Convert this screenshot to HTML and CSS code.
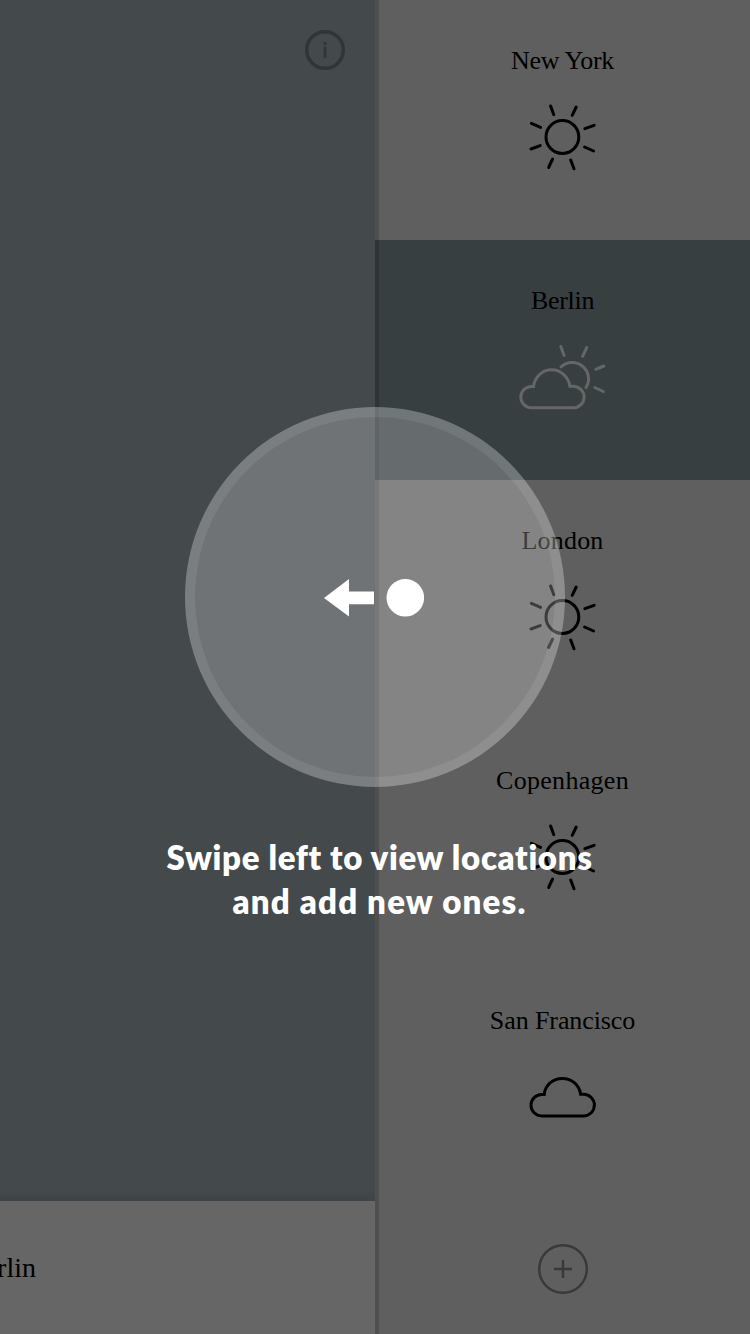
FILE: index.html
```html
<!DOCTYPE html>
<html lang="en">
<head>
<meta charset="utf-8">
<title>Weather locations</title>
<link rel="stylesheet" href="styles.css">
</head>
<body>
<svg class="symbols" aria-hidden="true">
  <symbol id="sun" viewBox="0.6 0 90 80">
    <circle cx="45" cy="40" r="16.4"/>
    <path d="M33.2 9l3.2 8.7M58.8 10l-4 8.3M14 26.4l9.200 4M67.500 31.700l9.200-3.400M13.600 52l9.200-3.400M67.200 50l9 4M35.200 62l-4 8.500M53.300 63l3.300 8.800"/>
  </symbol>
  <symbol id="partly" viewBox="0.7 0 90 80">
    <path d="M16.300 49.400C17.300 40 25 32.800 34.300 32.800S51.300 40 52.600 49.200H56a10.800 10.800 0 0 1 0 21.600H14.200a10.700 10.700 0 0 1 0-21.400zM43.700 29.800A16.400 16.400 0 0 1 68.700 50.600M43.500 9.500l3.300 9M69.500 10.500l-4.200 8.800M78.500 32.300l8-3.300M77.500 50.500l8.500 4"/>
  </symbol>
  <symbol id="cloud" viewBox="0.6 0 90 80">
    <path d="M26.800 37.500C27.800 28 35.500 21.400 45 21.400S62 28 63.200 37.300H66.200a10.800 10.800 0 0 1 0 21.600H24.300a10.700 10.700 0 0 1 0-21.400z"/>
  </symbol>
</svg>
<main class="screen">
  <section class="current">
    <div class="sky">
      <svg class="info" viewBox="0 0 40 40"><circle cx="20" cy="20" r="18.300"/><path d="M20 16.500V28"/><circle class="dot" cx="20" cy="13.400" r="1.600"/></svg>
    </div>
    <footer class="place"><span>Berlin</span></footer>
  </section>
  <nav class="locations">
    <div class="location new-york"><span>New York</span><svg><use href="#sun"/></svg></div>
    <div class="location berlin"><span>Berlin</span><svg><use href="#partly"/></svg></div>
    <div class="location london"><span>London</span><svg><use href="#sun"/></svg></div>
    <div class="location copenhagen"><span>Copenhagen</span><svg><use href="#sun"/></svg></div>
    <div class="location san-francisco"><span>San Francisco</span><svg><use href="#cloud"/></svg></div>
    <div class="add"><svg viewBox="0 0 50 50"><circle cx="25" cy="25" r="23.800"/><path d="M25 16v18M16 25h18"/></svg></div>
  </nav>
  <div class="tutorial">
    <div class="swipe"><svg viewBox="0 0 100 38"><path d="M0 19L25 0V12.500H50V25.200H25V37.500z"/><circle cx="81.300" cy="18.800" r="18.800"/></svg></div>
    <p class="hint"><span class="line-one">Swipe left to view locations</span><span class="line-two">and add new ones.</span></p>
  </div>
</main>
</body>
</html>
```
FILE: styles.css
```css
* { box-sizing: border-box; }
body { margin: 0; background: #5f5f5f; }
.symbols { position: absolute; width: 0; height: 0; }
.screen {
  position: relative;
  display: flex;
  width: 750px;
  height: 1334px;
  overflow: hidden;
  color: #000;
  font-family: "Liberation Serif", serif;
}
.current { display: flex; flex-direction: column; width: 375px; }
.sky {
  display: flex;
  justify-content: flex-end;
  height: 1201px;
  padding: 30px 30px 0 0;
  background: linear-gradient(#44494c 0 1189px, #3d4346 1201px);
}
.info { width: 40px; height: 40px; fill: none; stroke: #303537; stroke-width: 3.4; }
.info path { stroke-width: 2.8; }
.info .dot { fill: #303537; stroke: none; }
.place {
  display: flex;
  justify-content: flex-start;
  height: 133px;
  padding-top: 49px;
  background: #666;
  font-size: 28px;
  line-height: 36px;
}
.place span { margin-left: -34px; }
.locations {
  width: 375px;
  background: #5f5f5f;
  box-shadow: inset 4px 0 #504f4f;
}
.location {
  display: flex;
  flex-direction: column;
  align-items: center;
  height: 240px;
  padding-top: 46px;
  font-size: 26px;
  line-height: 30px;
}
.location svg {
  width: 90px;
  height: 80px;
  margin-top: 21px;
  fill: none;
  stroke: #000;
  stroke-width: 3;
  stroke-linecap: round;
}
.new-york { letter-spacing: -.3px; }
.berlin { letter-spacing: -.3px; background: #373f41; box-shadow: inset 4px 0 #2f3537; }
.berlin svg { stroke: #666; }
.london { letter-spacing: .2px; }
.copenhagen { letter-spacing: .3px; }
.san-francisco { letter-spacing: -.1px; }
.add { display: flex; justify-content: center; padding-top: 44px; }
.add svg { width: 50px; height: 50px; fill: none; stroke: #393939; stroke-width: 2.400; }
.tutorial {
  position: absolute;
  inset: 0;
  display: flex;
  flex-direction: column;
  align-items: center;
  padding-top: 407px;
  color: #fff;
}
.swipe {
  display: flex;
  align-items: center;
  justify-content: center;
  width: 380px;
  height: 380px;
  border: 10px solid rgba(255, 255, 255, .08);
  border-radius: 50%;
  background: rgba(255, 255, 255, .235);
}
.swipe svg { width: 100px; height: 38px; margin: 2px 0 0 -3px; fill: #fff; }
.hint {
  display: flex;
  flex-direction: column;
  align-items: center;
  margin: 48px 0 0 9px;
  font: 800 33px/44px Lato, sans-serif;
  white-space: nowrap;
}
.line-one { letter-spacing: .65px; }
.line-two { letter-spacing: 1.2px; }
```
